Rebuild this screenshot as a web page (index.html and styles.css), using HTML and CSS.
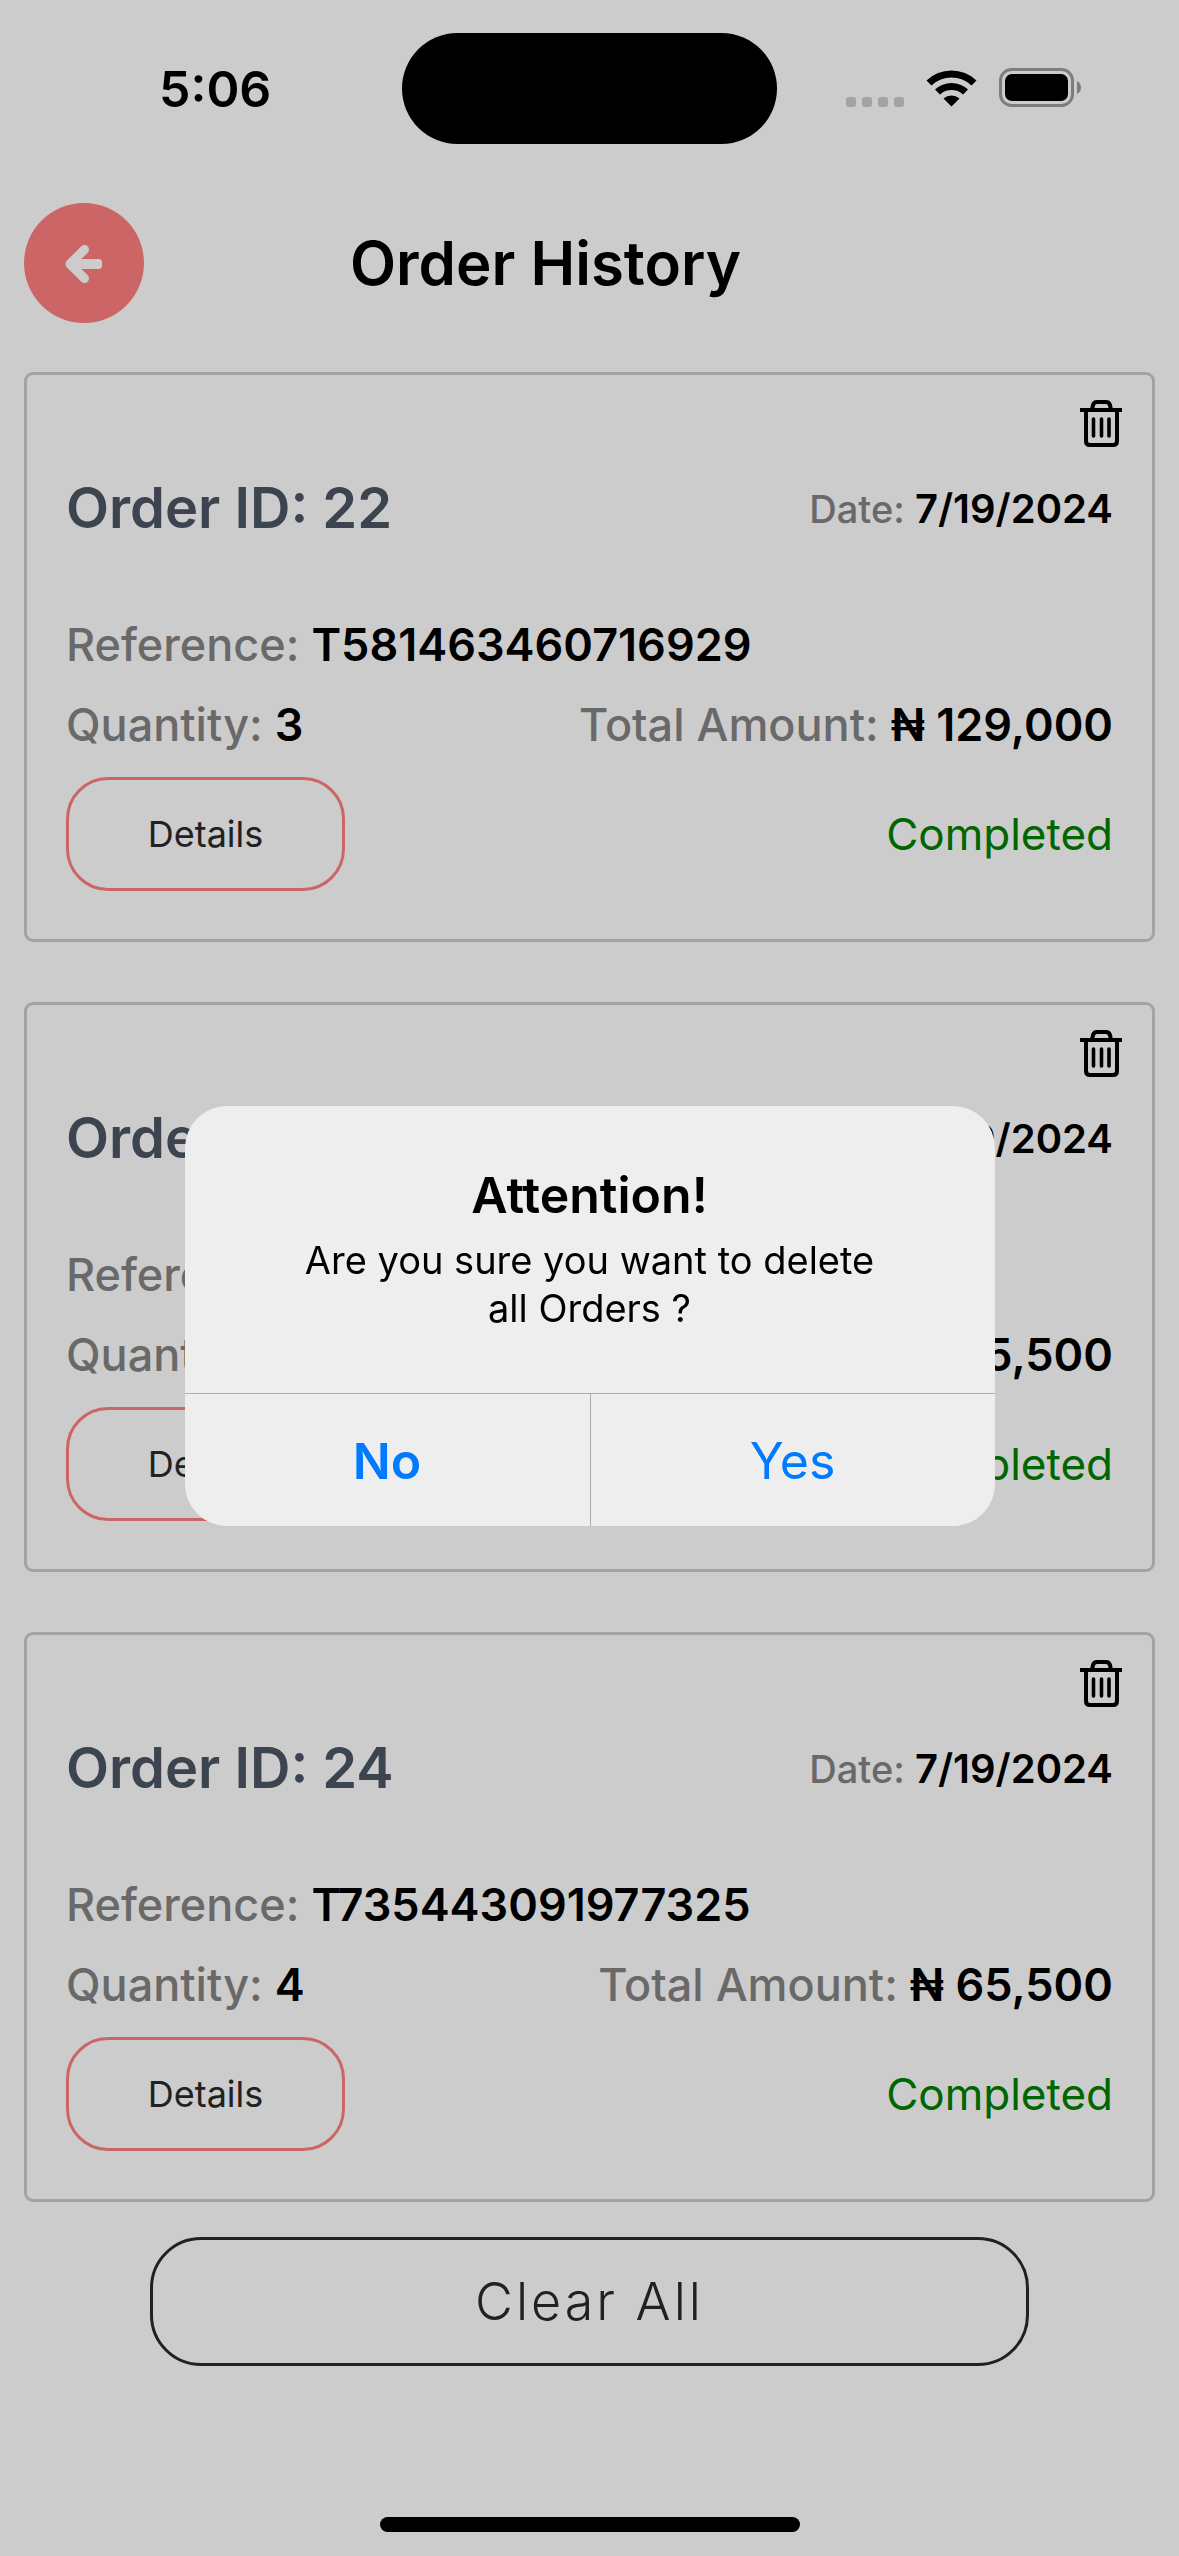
FILE: index.html
```html
<!DOCTYPE html>
<html lang="en">
<head>
<meta charset="utf-8">
<meta name="viewport" content="width=device-width, initial-scale=1">
<title>Order History</title>
<link rel="stylesheet" href="styles.css">
</head>
<body>
<svg class="sprite" aria-hidden="true">
  <symbol id="trash" viewBox="0 0 42 48">
    <g fill="none" stroke="currentColor" stroke-width="4">
      <path d="M0 10H42"/>
      <path d="M12 10L13 5Q14 2 17 2H26Q29 2 30 5L31 10"/>
      <path d="M6 10V41Q6 45 10 45H33Q37 45 37 41V10"/>
      <path d="M13.500 19V36M21.500 19V36M29 19V36" stroke-linecap="round" stroke-width="3.600"/>
    </g>
  </symbol>
</svg>
<div class="screen">
  <div class="status">
    <time class="clock">5:06</time>
    <div class="island"></div>
    <div class="indicators">
      <svg class="signal" viewBox="0 0 58 10" aria-hidden="true">
        <rect width="10" height="10" rx="3"/><rect x="16" width="10" height="10" rx="3"/><rect x="32" width="10" height="10" rx="3"/><rect x="48" width="10" height="10" rx="3"/>
      </svg>
      <svg class="wifi" viewBox="0 0 51 38" aria-hidden="true">
        <path d="M0.500 11.500A36 36 0 0 1 50.500 11.500L45.500 16.500A29 29 0 0 0 5.500 16.500Z"/>
        <path d="M9 20.500A24 24 0 0 1 42 20.500L37 25.500A17 17 0 0 0 14 25.500Z"/>
        <path d="M17.500 29.500A12 12 0 0 1 33.500 29.500L25.500 37.500Z"/>
      </svg>
      <svg class="battery" viewBox="0 0 82 39" aria-hidden="true">
        <rect x="1.500" y="1.500" width="72" height="36" rx="11" fill="none" stroke="#9d9d9d" stroke-width="3"/>
        <rect x="6" y="6" width="63" height="27" rx="7"/>
        <path d="M78 13Q82 15 82 19.500T78 26Z" fill="#9d9d9d"/>
      </svg>
    </div>
  </div>

  <header class="header">
    <button class="back" type="button" aria-label="Back">
      <svg viewBox="0 0 38 40" aria-hidden="true"><path d="M19.500 6.500L5 21L19.500 35.500"/><rect x="8" y="16" width="29" height="10" rx="3"/></svg>
    </button>
    <h1 class="title">Order History</h1>
  </header>

  <main class="orders">
    <article class="card">
      <button class="remove" type="button" aria-label="Delete order 22"><svg><use href="#trash"/></svg></button>
      <div class="row heading">
        <h2 class="order-id">Order ID: 22</h2>
        <p class="date">Date: <b>7/19/2024</b></p>
      </div>
      <p class="field">Reference: <b>T581463460716929</b></p>
      <div class="row">
        <p class="field">Quantity: <b>3</b></p>
        <p class="field">Total Amount: <b>₦ 129,000</b></p>
      </div>
      <div class="row">
        <button class="details" type="button">Details</button>
        <span class="state">Completed</span>
      </div>
    </article>

    <article class="card">
      <button class="remove" type="button" aria-label="Delete order 23"><svg><use href="#trash"/></svg></button>
      <div class="row heading">
        <h2 class="order-id">Order ID: 23</h2>
        <p class="date">Date: <b>7/19/2024</b></p>
      </div>
      <p class="field">Reference:</p>
      <div class="row">
        <p class="field">Quantity:</p>
        <p class="field">Total Amount: <b>₦ 65,500</b></p>
      </div>
      <div class="row">
        <button class="details" type="button">Details</button>
        <span class="state">Completed</span>
      </div>
    </article>

    <article class="card">
      <button class="remove" type="button" aria-label="Delete order 24"><svg><use href="#trash"/></svg></button>
      <div class="row heading">
        <h2 class="order-id">Order ID: 24</h2>
        <p class="date">Date: <b>7/19/2024</b></p>
      </div>
      <p class="field">Reference: <b>T735443091977325</b></p>
      <div class="row">
        <p class="field">Quantity: <b>4</b></p>
        <p class="field">Total Amount: <b>₦ 65,500</b></p>
      </div>
      <div class="row">
        <button class="details" type="button">Details</button>
        <span class="state">Completed</span>
      </div>
    </article>
  </main>

  <button class="clear" type="button">Clear All</button>
</div>

<div class="overlay">
  <section class="alert" role="alertdialog" aria-modal="true" aria-labelledby="alert-title" aria-describedby="alert-text">
    <div class="alert-body">
      <h2 class="alert-title" id="alert-title">Attention!</h2>
      <p class="alert-text" id="alert-text">Are you sure you want to delete all Orders ?</p>
    </div>
    <div class="alert-actions">
      <button class="action preferred" type="button">No</button>
      <button class="action" type="button">Yes</button>
    </div>
  </section>
  <div class="home-bar"></div>
</div>
</body>
</html>
```

FILE: styles.css
```css
* { box-sizing: border-box; }

body {
  margin: 0;
  background: #fff;
  color: #000;
  font-family: Inter, "Noto Sans", sans-serif;
}

h1, h2, p { margin: 0; }

button {
  margin: 0;
  padding: 0;
  border: 0;
  background: none;
  color: inherit;
  font: inherit;
  cursor: pointer;
}

.sprite { display: none; }

.screen {
  display: flex;
  flex-direction: column;
  min-height: 100vh;
  padding: 0 24px 102px;
}

/* Status bar */
.status {
  display: grid;
  grid-template-columns: 1fr 375px 1fr;
  align-items: center;
  height: 177px;
}

.clock {
  padding-left: 135px;
  font-size: 50px;
  font-weight: 600;
  line-height: 60px;
}

.island {
  height: 111px;
  border-radius: 56px;
  background: #000;
}

.indicators {
  display: flex;
  justify-content: flex-end;
  align-items: flex-end;
  gap: 22px;
  padding: 0 74px 2px 0;
}

.signal { width: 58px; height: 10px; fill: #ccc; }
.wifi { width: 51px; height: 38px; }
.battery { width: 82px; height: 39px; }

/* Header */
.header {
  display: grid;
  grid-template-columns: 120px 1fr;
  align-items: center;
  padding: 26px 208px 49px 0;
}

.back {
  display: grid;
  place-items: center;
  height: 120px;
  border-radius: 50%;
  background: #ff8080;
}

.back svg { width: 38px; height: 40px; fill: #fff; }

.back path {
  fill: none;
  stroke: #fff;
  stroke-width: 9;
  stroke-linecap: round;
  stroke-linejoin: round;
}

.title {
  font-size: 60px;
  font-weight: 600;
  line-height: 72px;
  text-align: center;
}

/* Order cards */
.orders {
  display: flex;
  flex-direction: column;
  gap: 60px;
}

.card {
  display: flex;
  flex-direction: column;
  gap: 24px;
  padding: 25px 39px 48px;
  border: 3px solid #ccc;
  border-radius: 9px;
}

.remove {
  align-self: flex-end;
  width: 42px;
  height: 48px;
  margin: 0 -9px 3px 0;
}

.remove svg { display: block; width: 100%; height: 100%; }

.row {
  display: flex;
  justify-content: space-between;
  align-items: center;
}

.heading { margin-bottom: 52px; }

.order-id {
  color: #4b5563;
  font-size: 56px;
  font-weight: 600;
  line-height: 66px;
}

.date { color: #848484; font-size: 38px; font-weight: 500; }
.date b { color: #000; font-size: 40px; font-weight: 600; }

.field {
  color: #848484;
  font-size: 45px;
  font-weight: 500;
  line-height: 56px;
}

.field b { color: #000; font-weight: 600; }

.details {
  width: 279px;
  height: 114px;
  border: 3px solid #ff8080;
  border-radius: 42px;
  color: #2a2a2a;
  font-size: 36px;
}

.state { color: #008000; font-size: 44px; }

.clear {
  width: 879px;
  max-width: 100%;
  height: 129px;
  margin: 35px auto 0;
  border: 3px solid #2a2a2a;
  border-radius: 51px;
  color: #2a2a2a;
  font-size: 52px;
  font-weight: 300;
  letter-spacing: 3px;
}

/* Confirmation alert */
.overlay {
  position: fixed;
  inset: 0;
  display: flex;
  justify-content: center;
  align-items: center;
  padding: 177px 24px 102px;
  background: rgba(0, 0, 0, 0.2);
}

.alert {
  width: 810px;
  border-radius: 42px;
  background: #eee;
  overflow: hidden;
}

.alert-body {
  padding: 56px 48px 61px;
  text-align: center;
}

.alert-title { font-size: 50px; font-weight: 600; line-height: 66px; }
.alert-text { max-width: 600px; margin: 8px auto 0; font-size: 38px; line-height: 48px; }

.alert-actions {
  display: grid;
  grid-template-columns: 1fr 1fr;
  border-top: 1px solid #aeaeb0;
}

.action {
  height: 132px;
  padding-top: 2px;
  color: #007aff;
  font-size: 50px;
}

.action + .action { border-left: 1px solid #aeaeb0; }
.preferred { font-weight: 600; }

.home-bar {
  position: absolute;
  bottom: 24px;
  width: 420px;
  height: 15px;
  border-radius: 8px;
  background: #000;
}
```
